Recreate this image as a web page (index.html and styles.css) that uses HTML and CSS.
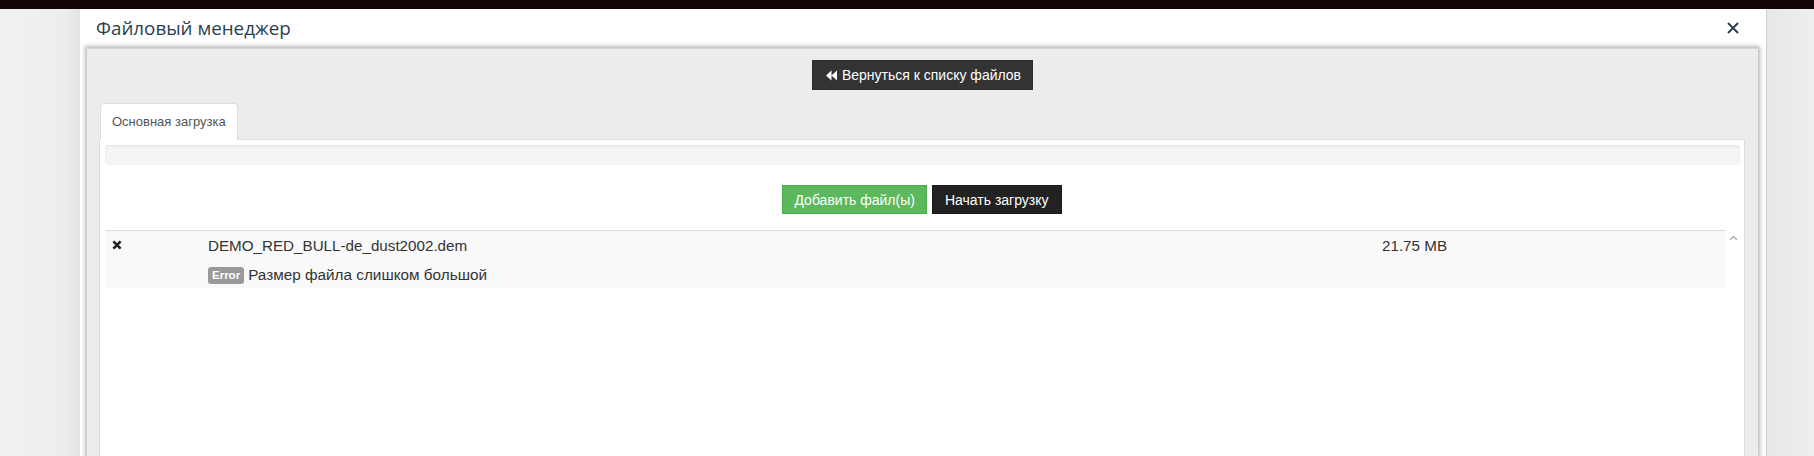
FILE: index.html
```html
<!DOCTYPE html>
<html lang="ru">
<head>
<meta charset="utf-8">
<title>Файловый менеджер</title>
<link rel="stylesheet" href="styles.css">
</head>
<body>
<div class="topbar"></div>
<div class="page">
  <div class="side side-left"></div>
  <div class="modal">
    <div class="modal-header">
      <h4 class="modal-title">Файловый менеджер</h4>
      <span class="close">
        <svg width="12" height="12" viewBox="0 0 12 12"><path d="M1 1 L11 11 M11 1 L1 11" stroke="#2c3e50" stroke-width="2" fill="none"/></svg>
      </span>
    </div>
    <div class="modal-body">
      <div class="frame">
        <div class="toolbar">
          <button class="btn btn-back">
            <svg class="ico-back" width="12" height="11" viewBox="0 0 12 11"><path d="M0 5.5 L5.5 0.5 L5.5 10.5 Z M5.5 5.5 L11 0.5 L11 10.5 Z" fill="#fff"/></svg>
            <span>Вернуться к списку файлов</span>
          </button>
        </div>
        <div class="tabs">
          <div class="tab">Основная загрузка</div>
        </div>
        <div class="tab-content">
          <div class="progress"></div>
          <div class="actions">
            <button class="btn btn-add">Добавить файл(ы)</button>
            <button class="btn btn-start">Начать загрузку</button>
          </div>
          <div class="list">
            <div class="table">
              <div class="row">
                <div class="cell cell-remove">
                  <svg width="10" height="10" viewBox="0 0 10 10"><path d="M1.4 1.4 L8.6 8.6 M8.6 1.4 L1.4 8.6" stroke="#222" stroke-width="2.6" fill="none"/></svg>
                </div>
                <div class="cell cell-name">
                  <div class="name">DEMO_RED_BULL-de_dust2002.dem</div>
                  <div class="err"><span class="label">Error</span> Размер файла слишком большой</div>
                </div>
                <div class="cell cell-size">21.75 MB</div>
              </div>
            </div>
            <div class="scrollbar">
              <svg width="9" height="6" viewBox="0 0 9 6"><path d="M1 5 L4.5 1.5 L8 5" stroke="#a8a8a8" stroke-width="1.3" fill="none"/></svg>
            </div>
          </div>
        </div>
      </div>
    </div>
  </div>
  <div class="side side-right"></div>
</div>
</body>
</html>
```

FILE: styles.css
```css
* { box-sizing: border-box; }

html, body {
  margin: 0;
  height: 456px;
  overflow: hidden;
}

body {
  font-family: "Liberation Sans", Arial, sans-serif;
  background: #eef0ef;
  color: #333;
}

.topbar {
  height: 9px;
  background: #130404;
}

.page {
  display: flex;
  height: 447px;
}

.side-left {
  width: 80px;
  background: linear-gradient(to right, #f0f2f1, #ecedec 80%, #e3e4e4);
}

.side-right {
  flex: 1;
  background: linear-gradient(to right, #e6e7e7, #eeefee);
}

.modal {
  width: 1687px;
  background: #fff;
  border-right: 1px solid #cfcfcf;
  display: flex;
  flex-direction: column;
}

.modal-header {
  height: 39px;
  padding: 0 27px 0 16px;
  display: flex;
  align-items: center;
  justify-content: space-between;
}

.modal-title {
  margin: 0;
  font-family: "Open Sans", "Noto Sans", sans-serif;
  font-weight: 400;
  font-size: 18.8px;
  color: #2c3e50;
  position: relative;
  top: -1px;
  white-space: nowrap;
}

.close {
  display: flex;
  width: 12px;
  height: 12px;
  position: relative;
  top: -1px;
}

.modal-body {
  flex: 1;
  padding: 0 8px 0 7px;
  min-height: 0;
}

.frame {
  height: 100%;
  background: #ececec;
  box-shadow: 0 0 4px 2px rgba(0, 0, 0, 0.28);
  border-top: 1px solid #d6d6d6;
  display: flex;
  flex-direction: column;
}

.toolbar {
  padding-top: 11px;
  display: flex;
  justify-content: center;
}

.btn {
  font-family: "Liberation Sans", Arial, sans-serif;
  font-size: 14px;
  color: #fff;
  border: 1px solid transparent;
  border-radius: 0;
  height: 30px;
  padding: 0 12px;
  margin: 0;
  cursor: pointer;
  display: inline-flex;
  align-items: center;
  justify-content: center;
  white-space: nowrap;
  flex: none;
}

.btn-back {
  background: #333;
  border-color: #2a2a2a;
  padding: 0 11px 0 13px;
  gap: 4px;
  font-size: 14px;
}

.ico-back {
  display: block;
  flex: none;
}

.tabs {
  margin-top: 13px;
  padding-left: 13px;
  display: flex;
  height: 36px;
  position: relative;
  z-index: 1;
}

.tab {
  background: #fff;
  border: 1px solid #ddd;
  border-bottom: none;
  border-radius: 4px 4px 0 0;
  padding: 0 11px;
  height: 37px;
  line-height: 35px;
  font-size: 13px;
  color: #555;
  white-space: nowrap;
}

.tab-content {
  flex: 1;
  margin: 0 13px 0 12px;
  background: #fff;
  border: 1px solid #ddd;
  border-bottom: none;
  padding: 5px 4px 0 5px;
}

.progress {
  height: 20px;
  background: #f5f5f5;
  border-radius: 4px;
  box-shadow: inset 0 1px 2px rgba(0, 0, 0, 0.08);
}

.actions {
  margin-top: 20px;
  display: flex;
  justify-content: center;
  gap: 5px;
  padding-right: 1px;
}

.btn-add {
  height: 29px;
  padding: 0 11px;
  background: #5cb85c;
  border-color: #4cae4c;
}

.btn-start {
  height: 29px;
  padding: 0 12px;
  background: #222;
  border-color: #1a1a1a;
}

.list {
  margin-top: 16px;
  display: flex;
}

.table {
  flex: 1;
  border-top: 1px solid #ddd;
}

.row {
  display: grid;
  grid-template-columns: 95px 1174px 1fr;
  background: #f9f9f9;
  height: 57px;
  font-size: 15.2px;
  color: #333;
}

.cell {
  padding: 5px 8px 0;
  line-height: 20px;
}

.cell-remove {
  padding-top: 9px;
  padding-left: 7px;
}

.cell-remove svg {
  display: block;
}

.err {
  margin-top: 9px;
  display: flex;
  align-items: center;
  gap: 4px;
  font-size: 15.3px;
  white-space: nowrap;
}

.label {
  display: inline-block;
  background: #999;
  color: #fff;
  font-size: 11.5px;
  font-weight: bold;
  line-height: 17px;
  height: 17px;
  padding: 0 4px;
  border-radius: 3px;
}

.scrollbar {
  width: 15px;
  padding: 5px 0 0 4px;
}

.scrollbar svg {
  display: block;
}
```
